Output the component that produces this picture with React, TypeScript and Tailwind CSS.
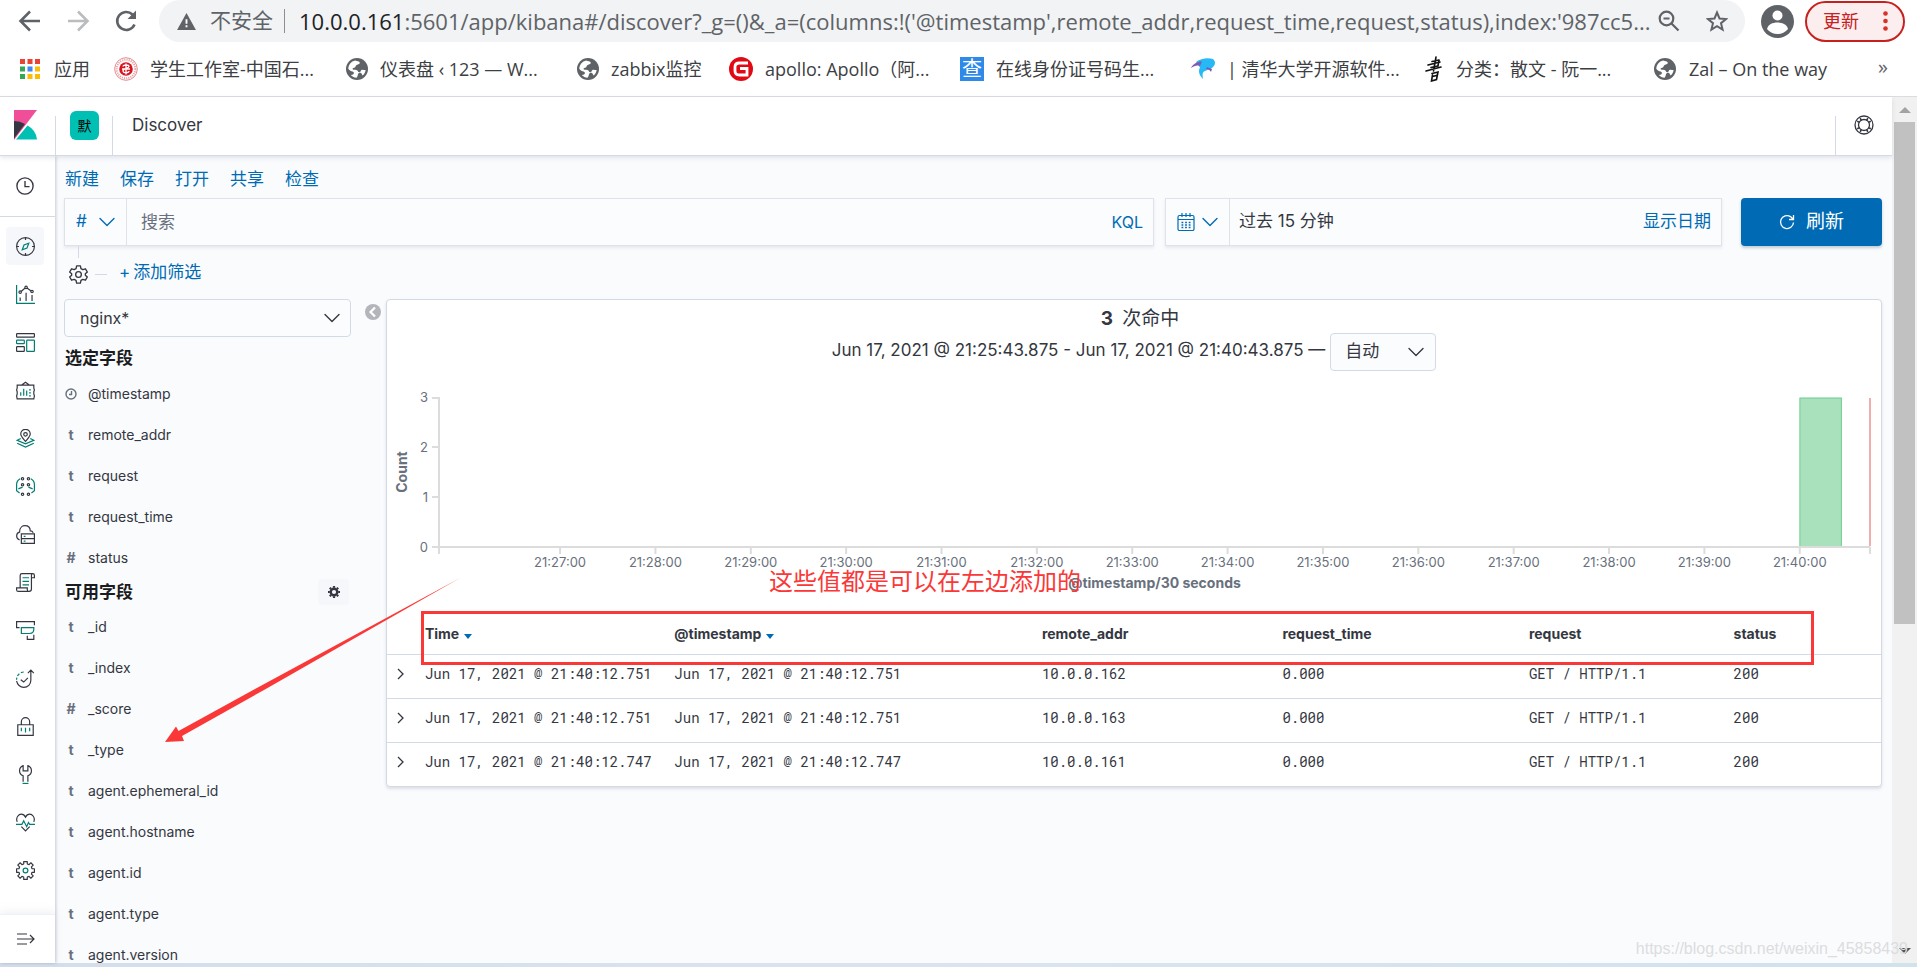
import { useState, type ReactNode } from "react";

const TEAL = "#017d73";

/* ---------- shared icons ---------- */

function AppIcon({ children }: { children: ReactNode }) {
  return (
    <svg
      viewBox="0 0 32 32"
      className="h-[19px] w-[19px] shrink-0"
      fill="none"
      stroke="#343741"
      strokeWidth="2"
      aria-hidden="true"
    >
      {children}
    </svg>
  );
}

function Chevron({ className = "" }: { className?: string }) {
  return (
    <svg viewBox="0 0 16 10" className={`h-[10px] w-4 ${className}`} fill="none" stroke="currentColor" strokeWidth="1.4" aria-hidden="true">
      <path d="M1 1.5l7 7 7-7" strokeLinecap="round" strokeLinejoin="round" />
    </svg>
  );
}

function Globe() {
  return (
    <svg viewBox="0 0 24 24" className="h-[22px] w-[22px] shrink-0" aria-hidden="true">
      <circle cx="12" cy="12" r="12" fill="#5f6368" />
      <path
        d="M10 2.6c2 .6 4.600 1 5 2.300.4 1.500-1.600 2.200-3.400 2.700-1.500.4-.6 2-2 2.700-1 .5-2.600.4-2.500 1.700.1 1.200 2.500.8 4.300 1 2 .2 1.200 2.400 3 2.500 1.800.1 1.300-2.300 3-2.700 1.500-.3 2.800.6 4 .2-.4 2.600-1.500 4.600-3.300 6-.9-1.200-1-2.600-2.600-2.800-1.800-.2-2.300 1-2.700 2.600-.2 1-.5 2-1.300 2.700-2.400-.1-4.700-1.300-6.300-3 2-.2 3.600-.8 3.400-2.500-.2-1.700-2.300-1.400-3.900-2.200-1-.5-1.700-1.200-2.200-2C2.600 7.300 5.600 3.600 10 2.600z"
        fill="#fff"
      />
    </svg>
  );
}

/* ---------- browser chrome ---------- */

function Toolbar() {
  return (
    <div className="flex h-[42px] items-center bg-white pr-3 text-[#5f6368]">
      <button aria-label="后退" className="ml-[18px] h-6 w-6">
        <svg viewBox="0 0 24 24" fill="none" stroke="currentColor" strokeWidth="2.600" aria-hidden="true">
          <path d="M22 12H3M12 2.500L2.500 12l9.500 9.500" />
        </svg>
      </button>
      <button aria-label="前进" className="ml-6 h-6 w-6 text-[#babcbe]">
        <svg viewBox="0 0 24 24" fill="none" stroke="currentColor" strokeWidth="2.600" aria-hidden="true">
          <path d="M2 12h19M12 2.500l9.500 9.500-9.500 9.500" />
        </svg>
      </button>
      <button aria-label="重新加载" className="ml-6 h-6 w-6">
        <svg viewBox="0 0 24 24" fill="none" stroke="currentColor" strokeWidth="2.600" aria-hidden="true">
          <path d="M20.500 15.500A9 9 0 1 1 18.500 5.500L21 8" />
          <path d="M22 1.500v8.500h-8.500z" fill="currentColor" stroke="none" />
        </svg>
      </button>
      <div className="ml-[21px] flex h-[42px] min-w-0 flex-1 items-center rounded-full bg-[#f1f3f4] pl-[18px] pr-[17px] text-[22px]">
        <svg viewBox="0 0 20 18" className="h-[17px] w-[19px] shrink-0" aria-hidden="true">
          <path d="M10 0l10 18H0z" fill="#5f6368" />
          <path d="M9 6.500h2v5H9zM9 13h2v2.200H9z" fill="#fff" />
        </svg>
        <span className="ml-[14px] shrink-0 text-[21px]">不安全</span>
        <span className="ml-[11px] h-6 w-px shrink-0 bg-[#8b8e92]" />
        <div
          role="textbox"
          tabIndex={0}
          aria-label="地址"
          className="ml-[14px] min-w-0 flex-1 overflow-hidden whitespace-nowrap text-[#5f6368]"
        >
          <span className="text-[#202124]">10.0.0.161</span>
          :5601/app/kibana#/discover?_g=()&amp;_a=(columns:!('@timestamp',remote_addr,request_time,request,status),index:'987cc5...
        </div>
        <button aria-label="缩放" className="h-[22px] w-[22px] shrink-0">
          <svg viewBox="0 0 22 22" fill="none" stroke="currentColor" strokeWidth="2.200" aria-hidden="true">
            <circle cx="8.500" cy="8.500" r="6.800" />
            <path d="M13.500 13.500l7 7M5.500 8.500h6" />
          </svg>
        </button>
        <button aria-label="收藏" className="ml-[26px] h-[22px] w-[22px] shrink-0">
          <svg viewBox="0 0 22 22" fill="none" stroke="currentColor" strokeWidth="2" aria-hidden="true">
            <path d="M11 2.500l2.500 6 6.500.5-5 4.200 1.600 6.400L11 16.200l-5.600 3.400L7 13.200 2 9l6.500-.5z" />
          </svg>
        </button>
      </div>
      <button aria-label="用户" className="ml-4 h-[33px] w-[33px] shrink-0">
        <svg viewBox="0 0 33 33" aria-hidden="true">
          <circle cx="16.500" cy="16.500" r="16.500" fill="#5f6368" />
          <circle cx="16.500" cy="10.500" r="5" fill="#fff" />
          <path d="M6 24c1-4.500 5.500-6.500 10.500-6.500S26 19.500 27 24a13.500 13.500 0 0 1-21 0z" fill="#fff" />
        </svg>
      </button>
      <button className="ml-[11px] flex h-[41px] w-[100px] shrink-0 items-center justify-between rounded-full border-2 border-[#c5221f] bg-[#fceeee] pl-4 pr-[15px] text-lg text-[#c5221f]">
        更新
        <svg viewBox="0 0 5 20" className="h-5 w-[5px]" fill="#d93025" aria-hidden="true">
          <circle cx="2.500" cy="2.500" r="2.300" />
          <circle cx="2.500" cy="10" r="2.300" />
          <circle cx="2.500" cy="17.500" r="2.300" />
        </svg>
      </button>
    </div>
  );
}

function Bookmark({ icon, label, className }: { icon: ReactNode; label: string; className: string }) {
  return (
    <a href="#" className={`flex shrink-0 items-center ${className}`}>
      {icon}
      <span className="whitespace-pre">{label}</span>
    </a>
  );
}

const APP_DOTS = ["#ea4335", "#ea4335", "#ea4335", "#34a853", "#4285f4", "#fbbc05", "#34a853", "#fbbc05", "#fbbc05"];

function Bookmarks() {
  return (
    <nav className="flex h-[55px] items-center overflow-hidden border-b border-[#dadce0] bg-white pl-5 pr-[29px] text-lg text-[#3c4043]">
      <Bookmark
        className="w-[94px] gap-[14px]"
        label="应用"
        icon={
          <svg viewBox="0 0 20 20" className="h-5 w-5" aria-hidden="true">
            {APP_DOTS.map((c, i) => (
              <rect key={i} x={(i % 3) * 7.5} y={Math.floor(i / 3) * 7.5} width="5" height="5" fill={c} />
            ))}
          </svg>
        }
      />
      <Bookmark
        className="w-[232px] gap-3"
        label="学生工作室-中国石..."
        icon={
          <svg viewBox="0 0 24 24" className="h-6 w-6 shrink-0" fill="none" aria-hidden="true">
            <circle cx="12" cy="12" r="11.300" stroke="#e58a8e" />
            <circle cx="12" cy="12" r="9.300" stroke="#eba3a6" strokeWidth="2" strokeDasharray="1.200 1" />
            <circle cx="12" cy="12" r="6.800" fill="#d7141f" />
            <path d="M12 6.500v11M9 9.500c0-2 6-2 6 0s-6 2-6 4.500 6 2 6 0M8 12h8" stroke="#fff" strokeWidth="1.300" />
          </svg>
        }
      />
      <Bookmark className="w-[231px] gap-3" label="仪表盘 ‹ 123 — W..." icon={<Globe />} />
      <Bookmark className="w-[152px] gap-3" label="zabbix监控" icon={<Globe />} />
      <Bookmark
        className="w-[231px] gap-3"
        label="apollo: Apollo（阿..."
        icon={
          <svg viewBox="0 0 24 24" className="h-6 w-6 shrink-0" aria-hidden="true">
            <circle cx="12" cy="12" r="12" fill="#e10a14" />
            <path d="M19 6H10.500Q6 6 6 10v4q0 4 4.500 4H18v-6.500h-7" fill="none" stroke="#fff" strokeWidth="2.800" />
          </svg>
        }
      />
      <Bookmark
        className="w-[231px] gap-3"
        label="在线身份证号码生..."
        icon={<span className="flex h-6 w-6 items-center justify-center bg-[#2d8ae8] text-xl leading-6 text-white">查</span>}
      />
      <Bookmark
        className="w-[233px] gap-3"
        label="| 清华大学开源软件..."
        icon={
          <svg viewBox="0 0 24 22" className="h-[22px] w-6 shrink-0" aria-hidden="true">
            <path d="M5 4C10 .5 16-.5 22 1c2 2 2.500 3.500 1.500 6-3 5-8 5-10.500 6.500-2 1.500-1.500 4-1 7.500C8 17 7 13 9 9.500z" fill="#27b9f5" />
            <path d="M0 10C2 6 6 3.500 11 3.500L9 8C6 7 3 8 0 10zM16 9l5 2-1 3c-1-2-3-3-5-3z" fill="#7d5bb5" />
          </svg>
        }
      />
      <Bookmark
        className="w-[230px] gap-3"
        label="分类：散文 - 阮一..."
        icon={
          <svg viewBox="0 0 20 26" className="h-[26px] w-5 shrink-0" fill="none" stroke="#111" strokeLinecap="round" aria-hidden="true">
            <path d="M8 5.500l7-1.500M4 9l12-3M7 11.500l7-1.500M2 15l15-4M12 1L9.500 15" strokeWidth="1.600" />
            <path d="M15 4.500l-1 5M8 17.500l6-1.500-1.500 7.500-5 1.500 1-6M8.500 20.500l4-1" strokeWidth="1.600" />
          </svg>
        }
      />
      <Bookmark className="gap-[13px]" label="Zal – On the way" icon={<Globe />} />
      <button aria-label="更多书签" className="ml-auto pb-1 text-xl text-[#5f6368]">
        »
      </button>
    </nav>
  );
}

/* ---------- kibana header and rail ---------- */

function Header() {
  return (
    <header className="relative z-10 flex h-[59px] border-b border-[#d3dae6] bg-white text-[#343741] shadow-[0_2px_4px_rgba(152,162,179,0.25)]">
      <a href="#" aria-label="Kibana" className="w-[55px] shrink-0 pl-[14px] pt-[13px]">
        <svg viewBox="0 0 24 30" className="h-[30px] w-6" aria-hidden="true">
          <path d="M0 0v30L23 0z" fill="#f04e98" />
          <path d="M0 11v17.500L11 14Q6 11 0 11z" fill="#343741" />
          <path d="M13.500 15.500L2 29.500h21Q22 20 13.500 15.500z" fill="#00bfb3" />
        </svg>
      </a>
      <span className="mt-[19px] w-px bg-[#d3dae6]" />
      <button className="ml-[14px] mt-[14px] h-[29px] w-[29px] rounded-md bg-[#00bfb3] text-sm leading-7 text-black">默</button>
      <span className="ml-[13px] mt-[19px] w-px bg-[#d3dae6]" />
      <h1 className="ml-[19px] mt-4 text-[17px] leading-6">Discover</h1>
      <span className="ml-auto mt-[19px] w-px bg-[#d3dae6]" />
      <button aria-label="帮助" className="mx-[18px] mt-[18px] h-5 w-5">
        <svg viewBox="0 0 20 20" fill="none" stroke="#343741" strokeWidth="1.300" aria-hidden="true">
          <circle cx="10" cy="10" r="9" />
          <circle cx="10" cy="10" r="5.500" />
          <path
            d="M3.200 6.200L5.600 7.400M6.200 3.200L7.400 5.600M13.800 3.200L12.600 5.600M16.800 6.200L14.400 7.400M3.200 13.800L5.600 12.600M6.200 16.800L7.400 14.400M13.800 16.800L12.600 14.400M16.800 13.800L14.400 12.600"
            strokeWidth="1.600"
          />
        </svg>
      </button>
    </header>
  );
}

const RAIL: { name: string; icon: ReactNode }[] = [
  {
    name: "Discover",
    icon: (
      <>
        <circle cx="16" cy="16" r="15" />
        <path d="M16 1v4M16 27v4M1 16h4M27 16h4" />
        <path d="M10.500 21.500l3-8 8-3-3 8z" stroke={TEAL} />
      </>
    ),
  },
  {
    name: "Visualize",
    icon: (
      <>
        <path d="M1 0v31h31" stroke={TEAL} />
        <path d="M7 21v6M17 13v14M27 17v10M8.500 11l7-6M18.500 5l7 5" />
        <circle cx="7" cy="12" r="2" />
        <circle cx="17" cy="4" r="2" />
        <circle cx="27" cy="11" r="2" />
      </>
    ),
  },
  {
    name: "Dashboard",
    icon: (
      <>
        <rect x="1" y="1" width="30" height="6" rx="1" />
        <rect x="1" y="12" width="13" height="6" rx="1" stroke={TEAL} />
        <rect x="1" y="23" width="13" height="8" rx="1" />
        <rect x="18" y="12" width="13" height="19" rx="1" stroke={TEAL} />
      </>
    ),
  },
  {
    name: "Canvas",
    icon: (
      <>
        <path d="M1 7h30M1 30h30M2 7v5l-1 3 1 3v4l-1 3 1 5M30 7v5l1 3-1 3v4l1 3-1 5M9 7l7-5 7 5" />
        <path d="M8 25v-6M13 25V13M18 25v-9M22 15h3M22 20h3M22 25h3" stroke={TEAL} />
      </>
    ),
  },
  {
    name: "Maps",
    icon: (
      <>
        <path d="M16 21C11 15 8 12 8 8.500a8 8 0 0 1 16 0C24 12 21 15 16 21z" />
        <circle cx="16" cy="9" r="3" />
        <path d="M8 16l-6 3 14 6 14-6-6-3M2 24l14 6.500L30 24" stroke={TEAL} />
      </>
    ),
  },
  {
    name: "Machine Learning",
    icon: (
      <>
        <path d="M7 3C3 5 1 9 1 13v10l5 4M4 20l7-3M25 3c4 2 6 6 6 10v10l-5 4M28 20l-7-3" stroke={TEAL} />
        <circle cx="11" cy="3" r="2" />
        <circle cx="21" cy="3" r="2" />
        <circle cx="11" cy="13" r="2" />
        <circle cx="21" cy="13" r="2" />
        <circle cx="11" cy="29" r="2" />
        <circle cx="21" cy="29" r="2" />
      </>
    ),
  },
  {
    name: "Metrics",
    icon: (
      <>
        <path d="M6 25C-1 23 0 13 6 12 6 3 12 1 15 1c5 0 9 3 9 9 2 0 4 1 5 3" />
        <path d="M9 15h22v16H9zM9 23h22" />
        <path d="M13 19h3M13 27h3" stroke={TEAL} />
      </>
    ),
  },
  {
    name: "Logs",
    icon: (
      <>
        <path d="M7 25V4q0-3 3-3h18q3 0 3 3v4h-5V4q0-3 2-3M26 8v19q0 4-4 4H4q-3 0-3-3v-3h18v3q0 3 3 3" />
        <path d="M11 8h11M11 14h11M11 20h11" stroke={TEAL} />
      </>
    ),
  },
  {
    name: "APM",
    icon: (
      <>
        <path d="M6 11H1V1h30v6" />
        <path d="M9 11h21v3q0 7-7 7H9z" stroke={TEAL} />
        <path d="M30 23v8H19v-6" />
      </>
    ),
  },
  {
    name: "Uptime",
    icon: (
      <>
        <path d="M13 5C6 6 1 11 1 18" stroke={TEAL} strokeDasharray="5 3" />
        <path d="M1 20c1 6 6 11 12 11 7 0 12-5 12-12V2M20 7l5-5 5 5M8 18l5 4 7-7" />
      </>
    ),
  },
  {
    name: "SIEM",
    icon: (
      <>
        <path d="M3 13h26v18H3zM9 13V8a7 7 0 0 1 14 0v5" />
        <path d="M9 18v6M16 18v8M23 18v6" stroke={TEAL} />
      </>
    ),
  },
  {
    name: "Dev Tools",
    icon: (
      <>
        <path d="M12 28V18C4 15 4 4 12 1v9h8V1c8 3 8 14 0 17v10" />
        <path d="M11 31h10" stroke={TEAL} />
      </>
    ),
  },
  {
    name: "Stack Monitoring",
    icon: (
      <>
        <path d="M2 15C-1 7 5 2 9 2c4 0 6 3 7 5 1-2 3-5 7-5 4 0 10 5 7 13M9 23l7 7 7-7" />
        <path d="M0 19h10l3-6 5 10 3-7 2 3h9" stroke={TEAL} />
      </>
    ),
  },
  {
    name: "Management",
    icon: (
      <>
        <path d="M13 1h6v4l3 1 3-3 4 4-3 3 1 3h4v6h-4l-1 3 3 3-4 4-3-3-3 1v4h-6v-4l-3-1-3 3-4-4 3-3-1-3H1v-6h4l1-3-3-3 4-4 3 3 3-1z" strokeLinejoin="round" />
        <circle cx="16" cy="16" r="4" stroke={TEAL} />
      </>
    ),
  },
];

function Rail() {
  return (
    <nav className="z-[5] flex w-[55px] shrink-0 flex-col bg-white shadow-[1px_0_3px_rgba(100,110,140,0.35)]">
      <div className="flex h-[61px] shrink-0 items-center border-b border-[#d3dae6] pl-[15px]">
        <button aria-label="最近查看">
          <svg viewBox="0 0 16 16" className="h-[18px] w-5" fill="none" stroke="#343741" strokeWidth="1.200" aria-hidden="true">
            <circle cx="8" cy="8" r="7.200" />
            <path d="M8 3.500V8.500h4" />
          </svg>
        </button>
      </div>
      <div className="flex min-h-0 flex-1 flex-col gap-[10px] overflow-hidden pl-[6px] pt-[10px]">
        {RAIL.map((item, i) => (
          <button
            key={item.name}
            aria-label={item.name}
            className={`flex h-[38px] w-[38px] shrink-0 items-center justify-center rounded ${i === 0 ? "bg-[#f5f7fa]" : ""}`}
          >
            <AppIcon>{item.icon}</AppIcon>
          </button>
        ))}
      </div>
      <button
        aria-label="展开"
        className="flex h-[49px] shrink-0 items-center border-t border-[#eef1f6] pl-[17px] shadow-[0_-3px_8px_rgba(152,162,179,0.15)]"
      >
        <svg viewBox="0 0 18 12" className="h-3 w-[18px]" fill="none" stroke="#343741" strokeWidth="1.200" aria-hidden="true">
          <path d="M0 1h10M0 6h17M0 11h10M13 2l4 4-4 4" />
        </svg>
      </button>
    </nav>
  );
}

/* ---------- query bar ---------- */

function QueryBar() {
  return (
    <div className="flex">
      <div className="flex h-12 flex-1 items-center border border-[#dfe2e8] bg-[#fbfcfd] shadow-[0_2px_3px_rgba(152,162,179,0.2)]">
        <button aria-label="已保存查询" className="flex h-full w-[62px] items-center gap-3 border-r border-[#dfe2e8] pl-[11px] text-[17px] text-[#006bb4]">
          # <Chevron />
        </button>
        <input
          aria-label="搜索"
          placeholder="搜索"
          className="h-full min-w-0 flex-1 bg-transparent px-[14px] text-[17px] outline-none placeholder:text-[#69707d]"
        />
        <button className="pr-[10px] text-base text-[#006bb4]">KQL</button>
      </div>
      <div className="ml-[11px] flex h-12 w-[557px] items-center border border-[#dfe2e8] bg-[#fbfcfd] shadow-[0_2px_3px_rgba(152,162,179,0.2)]">
        <button aria-label="日期快选" className="flex h-full w-16 items-center gap-[7px] border-r border-[#dfe2e8] pl-[11px] text-[#006bb4]">
          <svg viewBox="0 0 18 18" className="h-[18px] w-[18px]" fill="none" stroke="currentColor" strokeWidth="1.200" aria-hidden="true">
            <rect x="1" y="2.500" width="16" height="15" rx="1.500" />
            <path d="M1 6.500h16M5 0v4M9 0v4M13 0v4" />
            <path d="M4.500 9.500h9M4.500 12h9M4.500 14.500h9" strokeWidth="1.400" strokeDasharray="1.800 1.800" />
          </svg>
          <Chevron />
        </button>
        <button className="ml-[9px] text-[17px] text-[#343741]">过去 15 分钟</button>
        <button className="ml-auto mr-[10px] text-[17px] text-[#006bb4]">显示日期</button>
      </div>
      <button className="ml-[19px] flex h-12 w-[141px] items-center justify-center gap-[11px] rounded bg-[#006bb4] text-[19px] text-white shadow-[0_2px_3px_rgba(54,97,126,0.3)]">
        <svg viewBox="0 0 16 16" className="h-4 w-4" fill="none" stroke="currentColor" strokeWidth="1.300" aria-hidden="true">
          <path d="M14.500 8.500A6.500 6.500 0 1 1 11.500 2.600L14 5M14.500 1v4.500H10" />
        </svg>
        刷新
      </button>
    </div>
  );
}

/* ---------- field sidebar ---------- */

type Field = { type: "t" | "#" | "clock"; name: string };

const SELECTED: Field[] = [
  { type: "clock", name: "@timestamp" },
  { type: "t", name: "remote_addr" },
  { type: "t", name: "request" },
  { type: "t", name: "request_time" },
  { type: "#", name: "status" },
];

const AVAILABLE: Field[] = [
  { type: "t", name: "_id" },
  { type: "t", name: "_index" },
  { type: "#", name: "_score" },
  { type: "t", name: "_type" },
  { type: "t", name: "agent.ephemeral_id" },
  { type: "t", name: "agent.hostname" },
  { type: "t", name: "agent.id" },
  { type: "t", name: "agent.type" },
  { type: "t", name: "agent.version" },
];

function FieldList({ fields }: { fields: Field[] }) {
  return (
    <ul>
      {fields.map((f) => (
        <li key={f.name} className="flex h-[41px] items-center text-sm text-[#343741]">
          <span className="flex w-[14px] justify-center font-bold text-[#69707d]">
            {f.type === "clock" ? (
              <svg viewBox="0 0 12 12" className="h-3 w-3" fill="none" stroke="currentColor" strokeWidth="1.400" aria-hidden="true">
                <circle cx="6" cy="6" r="5" />
                <path d="M6.500 3v3.500H4" />
              </svg>
            ) : (
              f.type
            )}
          </span>
          <span className="ml-[10px]">{f.name}</span>
        </li>
      ))}
    </ul>
  );
}

function Sidebar() {
  return (
    <aside className="w-[287px] shrink-0">
      <div className="relative">
        <select
          aria-label="索引模式"
          className="h-[38px] w-full appearance-none rounded border border-[#d3dae6] bg-[#fbfcfd] pl-[15px] text-base text-[#343741]"
        >
          <option>nginx*</option>
        </select>
        <Chevron className="pointer-events-none absolute right-[11px] top-[14px] text-[#343741]" />
      </div>
      <h2 className="h-[36px] pt-[9px] pl-px text-[17px] font-bold leading-6 text-[#1a1c21]">选定字段</h2>
      <FieldList fields={SELECTED} />
      <div className="flex h-7 items-center justify-between pl-px pr-[2px]">
        <h2 className="text-[17px] font-bold leading-6 text-[#1a1c21]">可用字段</h2>
        <button aria-label="字段设置" className="flex h-[26px] w-[31px] items-center justify-center rounded bg-[#f5f7fa]">
          <svg viewBox="0 0 12 12" className="h-3 w-3" aria-hidden="true">
            <circle cx="6" cy="6" r="3.300" fill="none" stroke="#343741" strokeWidth="2.400" />
            <path
              d="M6 0v12M0 6h12M1.800 1.800l8.400 8.400M10.200 1.800l-8.400 8.400"
              stroke="#343741"
              strokeWidth="2.200"
              strokeDasharray="1.800 8.400"
            />
          </svg>
        </button>
      </div>
      <FieldList fields={AVAILABLE} />
    </aside>
  );
}

/* ---------- histogram ---------- */

const TICKS = Array.from({ length: 14 }, (_, i) => `21:${27 + i}:00`);

function Histogram() {
  return (
    <div className="ml-[52px] mr-[11px] mt-[26px]">
      <svg className="h-[200px] w-full overflow-visible text-[13px]" fill="#69707d" role="img" aria-label="Count / @timestamp">
        <rect x="95.100%" y="1" width="2.900%" height="149" fill="#aae1bd" stroke="#6dcc91" />
        <g stroke="#dcdcdc" strokeWidth="2">
          <line x1="0" y1="0" x2="0" y2="157" />
          <line x1="-7" y1="150" x2="100%" y2="150" />
          <line x1="100%" y1="150" x2="100%" y2="157" />
          <line x1="-7" y1="1" x2="0" y2="1" />
          <line x1="-7" y1="50" x2="0" y2="50" />
          <line x1="-7" y1="100" x2="0" y2="100" />
        </g>
        <line x1="100%" y1="1" x2="100%" y2="149" stroke="#f1aeae" strokeWidth="2" />
        {[3, 2, 1, 0].map((n, i) => (
          <text key={n} x="-11" y={i * 50 + 5} textAnchor="end">
            {n}
          </text>
        ))}
        {TICKS.map((t, i) => {
          const x = `${8.46 + i * 6.664}%`;
          return (
            <g key={t}>
              <line x1={x} y1="150" x2={x} y2="157" stroke="#dcdcdc" strokeWidth="2" />
              <text x={x} y="170" textAnchor="middle">
                {t}
              </text>
            </g>
          );
        })}
        <text x="50%" y="191" textAnchor="middle" className="text-sm font-bold">
          @timestamp/30 seconds
        </text>
        <text transform="translate(-32 75) rotate(-90)" textAnchor="middle" className="text-sm font-bold">
          Count
        </text>
      </svg>
    </div>
  );
}

/* ---------- document table ---------- */

const ROWS = [
  { time: "Jun 17, 2021 @ 21:40:12.751", addr: "10.0.0.162" },
  { time: "Jun 17, 2021 @ 21:40:12.751", addr: "10.0.0.163" },
  { time: "Jun 17, 2021 @ 21:40:12.747", addr: "10.0.0.161" },
];

function SortArrow() {
  return (
    <svg viewBox="0 0 8 5" className="ml-[5px] inline h-[5px] w-2 align-baseline" aria-hidden="true">
      <path d="M0 0h8L4 5z" fill="#006bb4" />
    </svg>
  );
}

function DocTable() {
  return (
    <table className="mt-[18px] w-full table-fixed text-left text-sm leading-5 text-[#343741]">
      <thead>
        <tr className="h-[39px]">
          <th className="w-[2%]" aria-label="展开" />
          <th className="w-[16.700%] pl-2">
            Time
            <SortArrow />
          </th>
          <th className="w-[24.600%] pl-2">
            @timestamp
            <SortArrow />
          </th>
          <th className="w-[16.100%] pl-2">remote_addr</th>
          <th className="w-[16.500%] pl-2">request_time</th>
          <th className="w-[13.700%] pl-2">request</th>
          <th className="pl-2">status</th>
        </tr>
      </thead>
      <tbody className="font-['Roboto_Mono','Liberation_Mono',monospace]">
        {ROWS.map((r) => (
          <tr key={r.addr} className="h-11 whitespace-nowrap border-t border-[#d3dae6] align-top [&>td]:pt-[9px]">
            <td className="pl-[10px]">
              <button aria-label="展开行" className="mt-1 block h-3 w-2">
                <svg viewBox="0 0 8 12" fill="none" stroke="#343741" strokeWidth="1.300" aria-hidden="true">
                  <path d="M1 1l5 5-5 5" />
                </svg>
              </button>
            </td>
            <td className="pl-2">{r.time}</td>
            <td className="pl-2">{r.time}</td>
            <td className="pl-2">{r.addr}</td>
            <td className="pl-2">0.000</td>
            <td className="pl-2">GET / HTTP/1.1</td>
            <td className="pl-2">200</td>
          </tr>
        ))}
      </tbody>
    </table>
  );
}

function Results() {
  const [interval, setInterval] = useState("自动");

  return (
    <section className="relative min-w-0 flex-1 self-start rounded border border-[#d3dae6] bg-white text-[#343741] shadow-[0_2px_3px_rgba(152,162,179,0.3)]">
      <div className="flex h-[33px] items-center justify-center gap-[9px] pl-3 pt-[6px] text-[19px]">
        <strong>3</strong>
        <span>次命中</span>
      </div>
      <div className="flex h-[38px] items-center justify-center text-[17px]">
        <span className="pb-[2px]">Jun 17, 2021 @ 21:25:43.875 - Jun 17, 2021 @ 21:40:43.875 —</span>
        <div className="relative ml-[5px]">
          <select
            aria-label="时间间隔"
            value={interval}
            onChange={(e) => setInterval(e.target.value)}
            className="h-[38px] w-[106px] appearance-none rounded border border-[#d3dae6] bg-[#fbfcfd] pl-[14px] text-[17px]"
          >
            <option>自动</option>
          </select>
          <Chevron className="pointer-events-none absolute right-[12px] top-[14px]" />
        </div>
      </div>
      <Histogram />
      <DocTable />
      {/* marks drawn over the results */}
      <p className="absolute left-[382px] top-[266px] whitespace-nowrap text-2xl leading-8 text-[#fb3838]">
        这些值都是可以在左边添加的
      </p>
      <div className="absolute left-[34px] right-[67px] top-[311px] h-[54px] border-[3px] border-[#fb3838]" />
    </section>
  );
}

/* ---------- page ---------- */

export default function App() {
  return (
    <div className="relative flex h-screen flex-col overflow-hidden bg-white font-['Inter','Noto_Sans_CJK_SC',sans-serif]">
      <div className="shrink-0 font-['Open_Sans','Noto_Sans_CJK_SC',sans-serif]">
        <Toolbar />
        <Bookmarks />
      </div>

      <div className="flex min-h-0 flex-1">
        <div className="flex min-w-0 flex-1 flex-col">
          <Header />
          <div className="flex min-h-0 flex-1">
            <Rail />
            <main className="min-w-0 flex-1 overflow-hidden bg-[#fafbfd] pl-[9px] pr-[10px]">
              <nav className="flex h-[42px] items-center gap-[21px] pl-px pt-[6px] text-[17px] text-[#006bb4]">
                {["新建", "保存", "打开", "共享", "检查"].map((t) => (
                  <button key={t}>{t}</button>
                ))}
              </nav>
              <QueryBar />
              <div className="flex h-[53px]">
                <div className="flex w-[29px] flex-col items-center">
                  <span className="h-3 w-px bg-[#d3dae6]" />
                  <button aria-label="筛选设置" className="mt-[7px] h-[19px] w-[19px]">
                    <svg viewBox="0 0 20 20" fill="none" stroke="#343741" strokeWidth="1.400" strokeLinejoin="round" aria-hidden="true">
                      <path d="M8 1h4l.6 2.800 2 1.100 2.700-.9 2 3.400L17.200 9.300v1.400l2.100 1.900-2 3.400-2.700-.9-2 1.100L12 19H8l-.6-2.800-2-1.100-2.700.9-2-3.400 2.100-1.900V9.300L.7 7.400l2-3.400 2.700.9 2-1.100z" />
                      <circle cx="10" cy="10" r="3" />
                    </svg>
                  </button>
                </div>
                <span className="ml-[2px] mt-7 h-px w-3 bg-[#d3dae6]" />
                <button className="ml-3 flex h-[54px] items-center gap-[3px] text-[17px] text-[#006bb4]">
                  <span>+</span>
                  <span>添加筛选</span>
                </button>
              </div>
              <div className="flex">
                <Sidebar />
                <button aria-label="折叠侧栏" className="ml-[14px] mr-[5px] mt-[5px] h-4 w-4 shrink-0">
                  <svg viewBox="0 0 16 16" aria-hidden="true">
                    <circle cx="8" cy="8" r="8" fill="#b2b5ba" />
                    <path d="M10 3.500L5.500 8l4.500 4.500" fill="none" stroke="#fff" strokeWidth="2.200" />
                  </svg>
                </button>
                <Results />
              </div>
            </main>
          </div>
        </div>

        {/* page scrollbar */}
        <div className="flex w-[25px] shrink-0 flex-col items-center bg-[#f1f1f1]">
          <svg viewBox="0 0 12 6" className="mt-[10px] h-[6px] w-3" aria-hidden="true">
            <path d="M0 6l6-6 6 6z" fill="#a3a3a3" />
          </svg>
          <div className="mt-[9px] h-[58%] w-[21px] shrink-0 bg-[#c1c1c1]" />
          <svg viewBox="0 0 12 6" className="mb-[9px] mt-auto h-[6px] w-3" aria-hidden="true">
            <path d="M0 0l6 6 6-6z" fill="#505050" />
          </svg>
        </div>
      </div>

      <div className="h-1 shrink-0 bg-gradient-to-r from-[#d3deea] via-[#dbe4ee] to-[#d0e2ec]" />

      <svg viewBox="0 0 296 165" className="pointer-events-none absolute left-[165px] top-[578px] h-[165px] w-[296px]" aria-hidden="true">
        <path d="M0 164l11-15.500 2.500 4.500L90 111 295 0 99 112 17 158l2 5z" fill="#fb3838" />
      </svg>
      <p className="pointer-events-none absolute bottom-[6px] right-[9px] font-['Liberation_Sans',sans-serif] text-base leading-6 text-[#dcdddf]">
        https://blog.csdn.net/weixin_45858439
      </p>
    </div>
  );
}
